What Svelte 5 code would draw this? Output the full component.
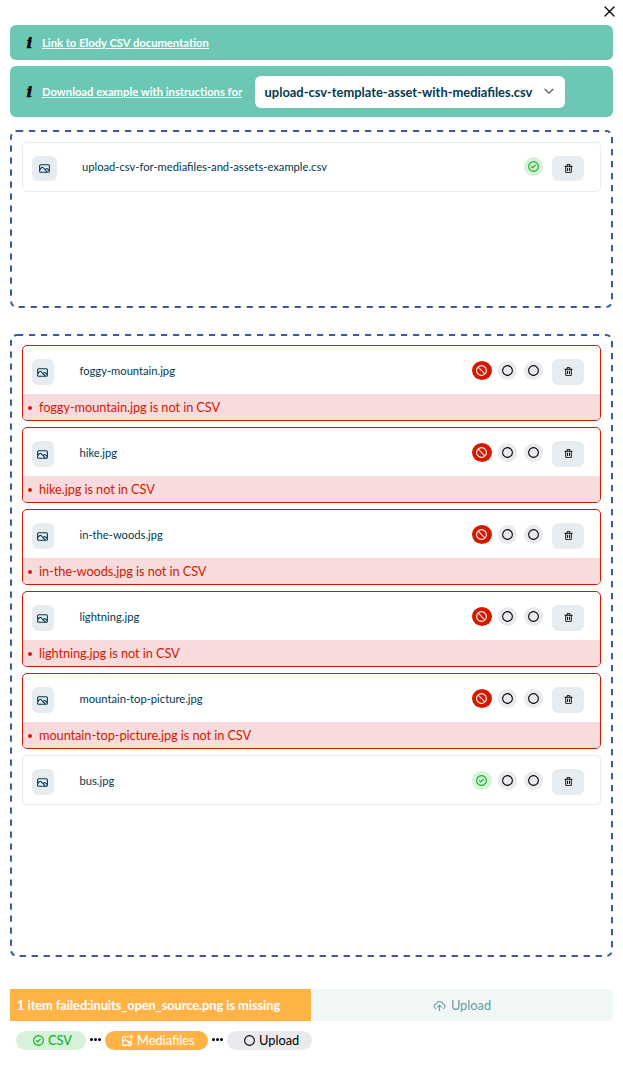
<script>
  const files = [
    { name: 'foggy-mountain.jpg', error: true },
    { name: 'hike.jpg', error: true },
    { name: 'in-the-woods.jpg', error: true },
    { name: 'lightning.jpg', error: true },
    { name: 'mountain-top-picture.jpg', error: true },
    { name: 'bus.jpg', error: false }
  ];
  const ring = 'M12,2A10,10,0,1,0,22,12,10,10,0,0,0,12,2Zm0,18a8,8,0,1,1,8-8A8,8,0,0,1,12,20Z';
  const paths = {
    circle: ring,
    check: 'M14.72,8.79l-4.29,4.3L8.78,11.44a1,1,0,1,0-1.41,1.41l2.35,2.36a1,1,0,0,0,.71.29,1,1,0,0,0,.7-.29l5-5a1,1,0,0,0,0-1.42A1,1,0,0,0,14.72,8.79Z' + ring,
    ban: 'M12,2A10,10,0,1,0,22,12,10,10,0,0,0,12,2Zm0,18a8,8,0,0,1-8-8A7.92,7.92,0,0,1,5.69,7.1L16.9,18.31A7.92,7.92,0,0,1,12,20Zm6.31-3.1L7.1,5.69A7.92,7.92,0,0,1,12,4a8,8,0,0,1,8,8A7.92,7.92,0,0,1,18.31,16.9Z',
    trash: 'M10,18a1,1,0,0,0,1-1V11a1,1,0,0,0-2,0v6A1,1,0,0,0,10,18ZM20,6H16V5a3,3,0,0,0-3-3H11A3,3,0,0,0,8,5V6H4A1,1,0,0,0,4,8H5V19a3,3,0,0,0,3,3h8a3,3,0,0,0,3-3V8h1a1,1,0,0,0,0-2ZM10,5a1,1,0,0,1,1-1h2a1,1,0,0,1,1,1V6H10Zm7,14a1,1,0,0,1-1,1H8a1,1,0,0,1-1-1V8H17Zm-3-1a1,1,0,0,0,1-1V11a1,1,0,0,0-2,0v6A1,1,0,0,0,14,18Z',
    image: 'M19,4H5A3,3,0,0,0,2,7V17a3,3,0,0,0,3,3H19a3,3,0,0,0,3-3V7A3,3,0,0,0,19,4ZM5,18a1,1,0,0,1-1-1V14.58l3.3-3.29a1,1,0,0,1,1.4,0L15.41,18Zm15-1a1,1,0,0,1-1,1h-.77l-3.81-3.83.88-.88a1,1,0,0,1,1.4,0L20,16.58Zm0-3.24-1.88-1.87a3.06,3.06,0,0,0-4.24,0l-.88.88L10.12,9.89a3,3,0,0,0-4.24,0L4,11.76V7A1,1,0,0,1,5,6H19a1,1,0,0,1,1,1Z'
  };
</script>

{#snippet icon(name, size)}
  <svg class="icon" width={size} height={size} viewBox="0 0 24 24"><path d={paths[name]} fill="currentColor" /></svg>
{/snippet}

{#snippet row(name)}
  <span class="thumb">{@render icon('image', 13)}</span>
  <span class="name">{name}</span>
{/snippet}

{#snippet outline()}
  <svg class="outline" width="100%" height="100%"><rect width="100%" height="100%" rx="7" fill="none" stroke="#375aaa" stroke-width="4" stroke-dasharray="6.2 5.8" /></svg>
{/snippet}

<main>
  <header>
    <svg class="icon" width="11" height="11" viewBox="0 0 11 11"><path d="M1 1l9 9M10 1l-9 9" stroke="#000" stroke-width="1.3" stroke-linecap="round" /></svg>
  </header>

  <div class="banner first"><span class="info">i</span><a href="#docs">Link to Elody CSV documentation</a></div>
  <div class="banner second">
    <span class="info">i</span><a href="#example">Download example with instructions for</a>
    <div class="select">
      <span>upload-csv-template-asset-with-mediafiles.csv</span>
      <svg class="icon" width="10" height="7" viewBox="0 0 10 7"><path d="M1 1.2l4 4 4-4" fill="none" stroke="#666" stroke-width="1.4" stroke-linecap="round" stroke-linejoin="round" /></svg>
    </div>
  </div>

  <section class="drop csv">
    {@render outline()}
    <div class="card">
      <div class="row">
        {@render row('upload-csv-for-mediafiles-and-assets-example.csv')}
        <span class="state ok">{@render icon('check', 13)}</span>
        <button aria-label="Delete">{@render icon('trash', 11)}</button>
      </div>
    </div>
  </section>

  <section class="drop media">
    {@render outline()}
    {#each files as f}
      <div class="card" class:failed={f.error}>
        <div class="row">
          {@render row(f.name)}
          <span class="state wide" class:bad={f.error} class:ok={!f.error}>{@render icon(f.error ? 'ban' : 'check', 13)}</span>
          <span class="state">{@render icon('circle', 13)}</span>
          <span class="state">{@render icon('circle', 13)}</span>
          <button aria-label="Delete">{@render icon('trash', 11)}</button>
        </div>
        {#if f.error}
          <div class="message"><i></i>{f.name} is not in CSV</div>
        {/if}
      </div>
    {/each}
  </section>

  <footer>
    <div class="warning">1 item failed:inuits_open_source.png is missing</div>
    <div class="upload">
      <svg class="icon" width="13" height="13" viewBox="0 0 24 24" fill="none" stroke="currentColor" stroke-width="2" stroke-linecap="round" stroke-linejoin="round"><path d="M5 17.5A4.2 4.2 0 0 1 5.5 9.300A6.800 6.800 0 0 1 18.500 9.300A4.200 4.200 0 0 1 19 17.500M12 21V12M8.500 15L12 11.500L15.500 15" /></svg>
      Upload
    </div>
  </footer>
  <div class="steps">
    <span class="pill done">{@render icon('check', 13)}<span>CSV</span></span>
    <span class="dots"><i></i><i></i><i></i></span>
    <span class="pill active">
      <svg class="icon" width="13" height="13" viewBox="0 0 24 24" fill="none" stroke="currentColor" stroke-width="2" stroke-linecap="round" stroke-linejoin="round"><path d="M13 5H5a2 2 0 0 0-2 2v12a2 2 0 0 0 2 2h12a2 2 0 0 0 2-2v-8M3 15l4-4q1-1 2 0l9 9M13 15l1-1q1-1 2 0l3 3M19 2v6M16 5h6" /></svg><span>Mediafiles</span></span>
    <span class="dots"><i></i><i></i><i></i></span>
    <span class="pill">{@render icon('circle', 13)}<span>Upload</span></span>
  </div>
</main>

<style>
  :global(body) { background: #fff; }
  main { box-sizing: border-box; width: 623px; height: 1076px; padding: 0 10px; font: 12.8px/16px Lato, sans-serif; color: #02394f; }
  .icon { display: block; flex: none; }
  header { height: 25px; box-sizing: border-box; display: flex; justify-content: flex-end; padding: 6px 0 0; margin-right: -2px; }
  .banner { box-sizing: border-box; background: #6cc7b5; border-radius: 6px; display: flex; align-items: center; padding-left: 16px; }
  .first { height: 35px; margin-bottom: 6px; }
  .second { height: 51px; margin-bottom: 13px; }
  .info { width: 16px; box-sizing: border-box; font: italic bold 15.5px/18px "DejaVu Serif", serif; color: #000; padding: 1px 0 0 .5px; -webkit-text-stroke: .4px #000; }
  .banner a { color: #fff; font-size: 11.23px; font-weight: 700; text-decoration: underline; white-space: nowrap; }
  .select { margin-left: 13px; width: 310px; height: 32px; box-sizing: border-box; padding: 0 11px 0 9.500px; border-radius: 6px; background: #fff; display: flex; align-items: center; justify-content: space-between; font-weight: 700; font-size: 12.9px; white-space: nowrap; }
  .drop { position: relative; box-sizing: border-box; border-radius: 7px; overflow: hidden; padding: 12px; display: flex; flex-direction: column; gap: 6px; }
  .outline { position: absolute; inset: 0; }
  .csv { height: 178px; margin-bottom: 26px; }
  .media { height: 623px; padding-top: 11px; }
  .card { border: 1px solid #e6ecef; border-radius: 5px; overflow: hidden; }
  .failed { border-color: #d31900; }
  .row { height: 48px; display: flex; align-items: center; padding: 0 16px 0 9px; }
  .thumb { width: 22px; height: 26px; margin-top: 4px; border-radius: 6px; background: #e6ecef; display: flex; align-items: center; justify-content: center; }
  .csv .thumb { width: 25px; height: 25px; margin-top: 3px; }
  .media .thumb { box-sizing: border-box; padding: 1px 1px 0 0; }
  .name { flex: 1; margin-left: 25px; font-size: 11.2px; line-height: 14px; }
  .media .name { padding: 1px 0 0 .5px; }
  .state { width: 19px; height: 19px; margin-left: 7px; border-radius: 50%; background: #e9eaee; color: #000; display: flex; align-items: center; justify-content: center; }
  .wide { width: 20px; margin-right: -1px; }
  .wide .icon { margin-right: 1px; }
  .csv .state { margin-top: -1px; }
  .ok { background: #d8f1da; color: #00b412; }
  .bad { background: #d31900; color: #fff; }
  button { box-sizing: border-box; width: 32px; height: 26px; margin: 4px 0 0 9px; padding: 0 0 1px 1px; border: 0; border-radius: 6px; background: #e6ecef; color: #000; display: flex; align-items: center; justify-content: center; }
  .csv button { height: 25px; margin-top: 3px; padding: 0 0 0 1px; }
  .message { height: 26px; display: flex; align-items: center; background: #f8dcdd; color: #d31900; padding-left: 5px; letter-spacing: -.09px; }
  .message i { width: 4px; height: 4px; border-radius: 50%; background: currentColor; margin: 1px 7px 0 0; }
  footer { display: flex; height: 32px; margin-top: 32px; }
  .warning { width: 301px; box-sizing: border-box; padding-left: 7px; background: #ffb347; color: #fff; font-weight: 700; line-height: 32px; letter-spacing: -.05px; }
  .upload { flex: 1; border-radius: 5px; background: #f1f7f7; color: #6799a5; display: flex; align-items: center; justify-content: center; gap: 5px; }
  .steps { display: flex; align-items: center; margin: 10px 0 0 6px; }
  .pill { box-sizing: border-box; height: 19px; width: 85px; padding-left: 16px; border-radius: 10px; background: #e9eaee; color: #000; display: flex; align-items: center; gap: 3px; }
  .pill span { margin-top: -1px; }
  .done { width: 70px; background: #d8f1da; color: #00b412; }
  .active { width: 103px; background: #ffb347; color: #fff; }
  .dots { width: 19px; display: flex; justify-content: center; gap: 1px; margin-top: -2px; }
  .dots i { width: 3px; height: 3px; border-radius: 50%; background: #000; }
</style>
